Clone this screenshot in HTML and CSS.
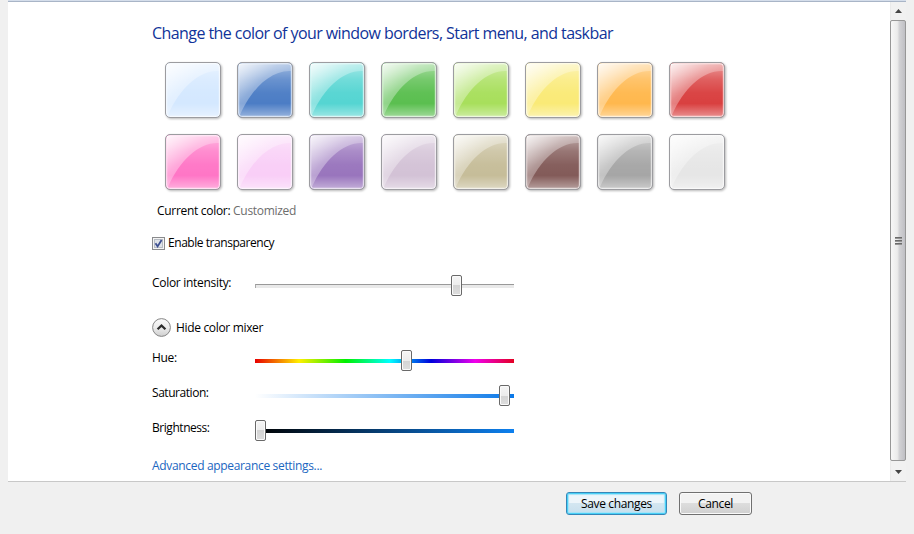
FILE: index.html
```html
<!DOCTYPE html>
<html lang="en">
<head>
<meta charset="utf-8">
<title>Window Color and Appearance</title>
<link rel="stylesheet" href="styles.css">
</head>
<body>
<svg class="defs" width="0" height="0" aria-hidden="true">
  <defs>
    <linearGradient id="depth" x1="0" y1="0" x2="0" y2="1">
      <stop offset="0" stop-color="#fff" stop-opacity=".48"/>
      <stop offset=".3" stop-color="#fff" stop-opacity=".17"/>
      <stop offset=".55" stop-color="#fff" stop-opacity=".03"/>
      <stop offset=".75" stop-color="#fff" stop-opacity="0"/>
      <stop offset="1" stop-color="#fff" stop-opacity=".42"/>
    </linearGradient>
    <linearGradient id="gloss" x1="0" y1="0" x2=".75" y2=".75">
      <stop offset="0" stop-color="#fff" stop-opacity=".85"/>
      <stop offset=".5" stop-color="#fff" stop-opacity=".36"/>
      <stop offset="1" stop-color="#fff" stop-opacity=".1"/>
    </linearGradient>
    <symbol id="tile" viewBox="0 0 56 56">
      <rect x=".5" y=".5" width="55" height="55" rx="4.5" fill="currentColor"/>
      <rect x="1" y="1" width="54" height="54" rx="4" fill="url(#depth)"/>
      <path d="M2 2H54V9C34 8 15 26 3 53H2Z" fill="url(#gloss)"/>
      <rect x="1.6" y="1.6" width="52.8" height="52.8" rx="3.5" fill="none" stroke="#fff" stroke-opacity=".65" stroke-width="1.2"/>
      <rect x=".5" y=".5" width="55" height="55" rx="4.5" fill="none" stroke="#9c9ca0"/>
    </symbol>
  </defs>
</svg>
<div class="window">
  <div class="panel">
    <main class="content">
      <h1>Change the color of your window borders, Start menu, and taskbar</h1>
      <div class="swatches">
        <svg class="swatch sky"><use href="#tile"/></svg>
        <svg class="swatch twilight"><use href="#tile"/></svg>
        <svg class="swatch sea"><use href="#tile"/></svg>
        <svg class="swatch leaf"><use href="#tile"/></svg>
        <svg class="swatch lime"><use href="#tile"/></svg>
        <svg class="swatch sun"><use href="#tile"/></svg>
        <svg class="swatch pumpkin"><use href="#tile"/></svg>
        <svg class="swatch ruby"><use href="#tile"/></svg>
        <svg class="swatch fuchsia"><use href="#tile"/></svg>
        <svg class="swatch blush"><use href="#tile"/></svg>
        <svg class="swatch violet"><use href="#tile"/></svg>
        <svg class="swatch lavender"><use href="#tile"/></svg>
        <svg class="swatch taupe"><use href="#tile"/></svg>
        <svg class="swatch chocolate"><use href="#tile"/></svg>
        <svg class="swatch slate"><use href="#tile"/></svg>
        <svg class="swatch frost"><use href="#tile"/></svg>
      </div>
      <p class="current">Current color: <span>Customized</span></p>
      <div class="check-row">
        <svg class="check" viewBox="0 0 13 13"><rect x=".5" y=".5" width="12" height="12" fill="#f4f4f4" stroke="#8a8b8d"/><rect x="2.5" y="2.5" width="8" height="8" fill="#dfe3e8" stroke="#b7bcc4"/><path d="M3.5 6.2L5.6 9.4L9.6 3" fill="none" stroke="#3d4f91" stroke-width="1.8"/></svg>
        <span class="check-label">Enable transparency</span>
      </div>
      <div class="slider-row intensity"><span class="label">Color intensity:</span><div class="track plain"><i class="thumb"></i></div></div>
      <div class="mixer-row">
        <svg class="chevron" viewBox="0 0 19 19"><defs><linearGradient id="round" x1="0" y1="0" x2="0" y2="1"><stop offset="0" stop-color="#fafafa"/><stop offset=".5" stop-color="#ececec"/><stop offset="1" stop-color="#cfcfcf"/></linearGradient></defs><circle cx="9.5" cy="9.5" r="8.9" fill="url(#round)" stroke="#858585"/><path d="M5.6 11.3L9.5 7.5L13.4 11.3" fill="none" stroke="#2b2b2b" stroke-width="2.3"/></svg>
        <span class="mixer-label">Hide color mixer</span>
      </div>
      <div class="slider-row"><span class="label">Hue:</span><div class="track hue"><i class="thumb"></i></div></div>
      <div class="slider-row"><span class="label tight">Saturation:</span><div class="track saturation"><i class="thumb"></i></div></div>
      <div class="slider-row"><span class="label tight">Brightness:</span><div class="track brightness"><i class="thumb"></i></div></div>
      <a class="advanced">Advanced appearance settings...</a>
    </main>
    <div class="scrollbar">
      <svg class="arrow" viewBox="0 0 15 18"><path d="M4 11L7.5 7L11 11Z" fill="#444"/></svg>
      <div class="grip"><i></i><i></i><i></i></div>
      <svg class="arrow down" viewBox="0 0 15 20"><path d="M4 9H11L7.5 13Z" fill="#444"/></svg>
    </div>
  </div>
  <footer class="actions">
    <button class="primary">Save changes</button>
    <button class="cancel">Cancel</button>
  </footer>
</div>
</body>
</html>
```
FILE: styles.css
```css
* { box-sizing: border-box; }
body { margin: 0; background: #f0f0f0; font: 12px/16px "Open Sans", "Noto Sans", sans-serif; color: #000; letter-spacing: -0.3px; }
.defs { position: absolute; }
.window { height: 534px; padding: 0 8px; display: flex; flex-direction: column; overflow: hidden; }
.panel { height: 482px; display: flex; background: linear-gradient(#d5deeb 1px, #a9b5c7 1px, #a9b5c7 2px, #fff 2px); padding-top: 2px; border-bottom: 1px solid #c8c8c8; }
.content { flex: 1; padding: 20px 0 0 144px; display: flex; flex-direction: column; align-items: flex-start; white-space: nowrap; }
h1 { margin: 0; font-size: 16px; line-height: 22px; font-weight: 400; color: #103399; letter-spacing: -0.57px; }
.swatches { display: grid; grid-template-columns: repeat(8, 56px); gap: 16px; margin: 18px 0 0 13px; }
.swatch { width: 56px; height: 56px; display: block; filter: drop-shadow(1px 1px 1px rgba(0, 0, 0, .28)); }
.sky { color: #d4e8ff; }
.twilight { color: #4c7dc5; }
.sea { color: #55d5d2; }
.leaf { color: #5bbf50; }
.lime { color: #a8df5c; }
.sun { color: #faea77; }
.pumpkin { color: #ffb84e; }
.ruby { color: #d94040; }
.fuchsia { color: #ff76c6; }
.blush { color: #f9cef7; }
.violet { color: #9975bd; }
.lavender { color: #d3c2d6; }
.taupe { color: #c6bd99; }
.chocolate { color: #835b59; }
.slate { color: #a6a6a6; }
.frost { color: #e6e6e6; }
.current { margin: 13px 0 0 5px; height: 16px; }
.current span { color: #6d6d6d; }
.check-row { display: flex; align-items: center; gap: 3px; height: 16px; margin-top: 16px; }
.check { width: 13px; height: 13px; }
.check-label { letter-spacing: -0.45px; }
.slider-row { display: flex; align-items: flex-start; height: 35px; }
.slider-row.intensity { margin-top: 24px; height: 43px; }
.label { width: 103px; }
.label.tight { letter-spacing: -0.45px; }
.track { width: 259px; height: 4px; margin-top: 9px; position: relative; }
.plain { background: #e9e9e9; border-top: 1px solid #999; border-left: 1px solid #aaa; }
.hue { background: linear-gradient(90deg, #e80000, #ffef00 17%, #00f000 35%, #00ffff 52%, #0000dc 68%, #f000ec 85%, #e30022); }
.saturation { background: linear-gradient(90deg, #fff, #0a78e8); }
.brightness { background: linear-gradient(90deg, #000, #0d80ef); }
.thumb { position: absolute; top: -9px; width: 11px; height: 21px; border: 1px solid #696969; border-radius: 2px; background: linear-gradient(#f5f5f5, #ececec 50%, #d3d3d3 50%, #dedede); box-shadow: inset 0 0 0 1px #fafafa; }
.plain .thumb { left: 195px; top: -10px; }
.hue .thumb { left: 146px; }
.saturation .thumb { left: 244px; }
.brightness .thumb { left: 0; }
.mixer-row { display: flex; align-items: center; gap: 5px; height: 20px; margin: -1px 0 13px; }
.mixer-label { padding-top: 2px; letter-spacing: -0.33px; }
.chevron { width: 19px; height: 19px; }
.advanced { margin-top: 3px; color: #1a66bf; letter-spacing: -0.33px; }
.scrollbar { width: 16px; height: 479px; background: #f1f1f1; display: flex; flex-direction: column; border-left: 1px solid #eaeaea; }
.arrow { width: 15px; height: 18px; display: block; }
.arrow.down { height: 20px; }
.grip { flex: 1; margin-left: -1px; border: 1px solid #979797; border-radius: 2px; background: linear-gradient(90deg, #f7f7f7, #ebebeb 45%, #d2d2d5 60%, #bfbfc4); display: flex; flex-direction: column; align-items: center; justify-content: center; gap: 1px; }
.grip i { width: 7px; height: 2px; background: linear-gradient(#555, #aaa); }
.actions { display: flex; gap: 12px; padding: 10px 0 0 558px; }
button { height: 23px; padding: 0; border: 1px solid #707070; border-radius: 3px; font: 12px/20px "Open Sans", "Noto Sans", sans-serif; letter-spacing: -0.36px; color: #000; background: linear-gradient(#f2f2f2 48%, #dddddd 50%, #d0d0d0); box-shadow: inset 0 0 0 1px #fafafa; }
.primary { width: 101px; border-color: #3586b8; background: linear-gradient(#edf5fa 48%, #d3e6f1 50%, #c7dfed); box-shadow: inset 0 0 0 1px #48d0f6, inset 0 0 1px 2px #a5e3f8; }
.cancel { width: 73px; }
```
